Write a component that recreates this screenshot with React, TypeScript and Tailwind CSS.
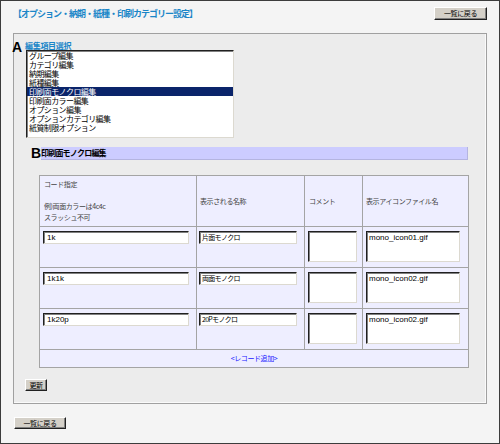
import React from "react";

const jp = "font-['Noto_Sans_CJK_JP',sans-serif]";

function Btn({ children, className = "" }: { children: React.ReactNode; className?: string }) {
  return (
    <button
      className={`flex items-center justify-center border border-t-white border-l-white border-r-[#202020] border-b-[#202020] bg-[#d4d0c8] text-[7px] leading-none tracking-[-0.4px] text-black shadow-[inset_-1px_-1px_0_#808080] ${jp} ${className}`}
    >
      {children}
    </button>
  );
}

const items = [
  "グループ編集",
  "カテゴリ編集",
  "納期編集",
  "紙種編集",
  "印刷面モノクロ編集",
  "印刷面カラー編集",
  "オプション編集",
  "オプションカテゴリ編集",
  "紙質制限オプション",
];

const rows = [
  { code: "1k", name: "片面モノクロ", file: "mono_icon01.gif" },
  { code: "1k1k", name: "両面モノクロ", file: "mono_icon02.gif" },
  { code: "1k20p", name: "20Pモノクロ", file: "mono_icon02.gif" },
];

const inset =
  "border border-t-[#202020] border-l-[#202020] border-r-[#dcd9d0] border-b-[#dcd9d0] bg-white shadow-[inset_1px_1px_0_#808080]";

export default function App() {
  return (
    <div className={`h-[444px] w-[500px] border border-[#3c3c3c] bg-[#f4f4f4] px-[12px] pt-[6px] ${jp}`}>
      {/* 見出しと戻るボタン */}
      <div className="flex h-[13px] items-center justify-between">
        <p className="text-[9px] font-bold leading-none tracking-[-1px] text-[#1a86c8]">
          【オプション・納期・紙種・印刷カテゴリー設定】
        </p>
        <Btn className="h-[13px] w-[53px]">一覧に戻る</Btn>
      </div>

      <div className="mt-[13px] flex h-[371px] flex-col border border-[#a0a0a0] bg-[#ececec] pt-[7px] shadow-[inset_-1px_-1px_0_#fafafa]">
        {/* A: 編集項目選択 */}
        <div className="flex items-start">
          <span className="-ml-[2px] -mt-[1px] w-[13px] font-['Liberation_Sans',sans-serif] text-[14px] font-bold leading-[14px] text-black">
            A
          </span>
          <div className="flex flex-col">
            <p className="h-[9px] text-[8px] font-bold leading-[9px] tracking-[-0.3px] text-[#1a86c8]">
              編集項目選択
            </p>
            <div className={`ml-[1px] h-[88px] w-[208px] ${inset}`}>
              {items.map((it, i) => (
                <div
                  key={it}
                  className={`h-[9px] pl-[2px] text-[8px] leading-[9px] tracking-[-0.6px] ${
                    i === 4 ? "bg-[#0a246a] text-white" : "text-black"
                  }`}
                >
                  {it}
                </div>
              ))}
            </div>
          </div>
        </div>

        {/* B: 印刷面モノクロ編集 */}
        <div className="ml-[17px] mr-[18px] mt-[9px] flex h-[13px] items-stretch">
          <span className="w-[10px] font-['Liberation_Sans',sans-serif] text-[14px] font-bold leading-[13px] text-black">
            B
          </span>
          <div className="flex flex-1 items-center border-b border-r border-[#b4b4e0] bg-[#ccccff] text-[8px] font-bold leading-none tracking-[-0.8px] text-black">
            印刷面モノクロ編集
          </div>
        </div>

        <table className="ml-[25px] mr-[18px] mt-[15px] w-[429px] table-fixed border-collapse border border-[#a4a4a4] bg-[#eeeeff] text-[7px] tracking-[-0.4px] text-[#444]">
          <colgroup>
            <col className="w-[157px]" />
            <col className="w-[108px]" />
            <col className="w-[58px]" />
            <col className="w-[106px]" />
          </colgroup>
          <tbody>
            <tr className="h-[51px]">
              <td className="border border-[#a4a4a4] px-[4px] align-middle leading-[11px]">
                コード指定
                <br />
                <br />
                例)両面カラーは4c4c
                <br />
                スラッシュ不可
              </td>
              <td className="border border-[#a4a4a4] px-[3px] align-middle">表示される名称</td>
              <td className="border border-[#a4a4a4] px-[4px] align-middle">コメント</td>
              <td className="border border-[#a4a4a4] px-[3px] align-middle">表示アイコンファイル名</td>
            </tr>
            {rows.map((r) => (
              <tr key={r.code} className="h-[41px]">
                <td className="border border-[#a4a4a4] pl-[3px] pt-[4px] align-top">
                  <div className={`h-[13px] w-[146px] pl-[3px] font-['Liberation_Sans',sans-serif] text-[8px] leading-[11px] tracking-normal text-black ${inset}`}>
                    {r.code}
                  </div>
                </td>
                <td className="border border-[#a4a4a4] pl-[2px] pt-[4px] align-top">
                  <div className={`h-[13px] w-[98px] pl-[2px] text-[7px] leading-[11px] tracking-[-0.7px] text-black ${inset}`}>
                    {r.name}
                  </div>
                </td>
                <td className="border border-[#a4a4a4] pl-[3px] pt-[4px] align-top">
                  <div className={`h-[31px] w-[49px] ${inset}`} />
                </td>
                <td className="border border-[#a4a4a4] pl-[3px] pt-[4px] align-top">
                  <div className={`h-[31px] w-[94px] pl-[2px] font-['Liberation_Sans',sans-serif] text-[8px] leading-[11px] tracking-normal text-black ${inset}`}>
                    {r.file}
                  </div>
                </td>
              </tr>
            ))}
            <tr className="h-[18px]">
              <td colSpan={4} className="border border-[#a4a4a4] text-center align-middle text-[7px] text-[#2020ff]">
                &lt;レコード追加&gt;
              </td>
            </tr>
          </tbody>
        </table>

        <Btn className="ml-[11px] mt-[11px] h-[12px] w-[22px]">更新</Btn>
      </div>

      <Btn className="ml-[1px] mt-[13px] h-[12px] w-[52px]">一覧に戻る</Btn>
    </div>
  );
}
